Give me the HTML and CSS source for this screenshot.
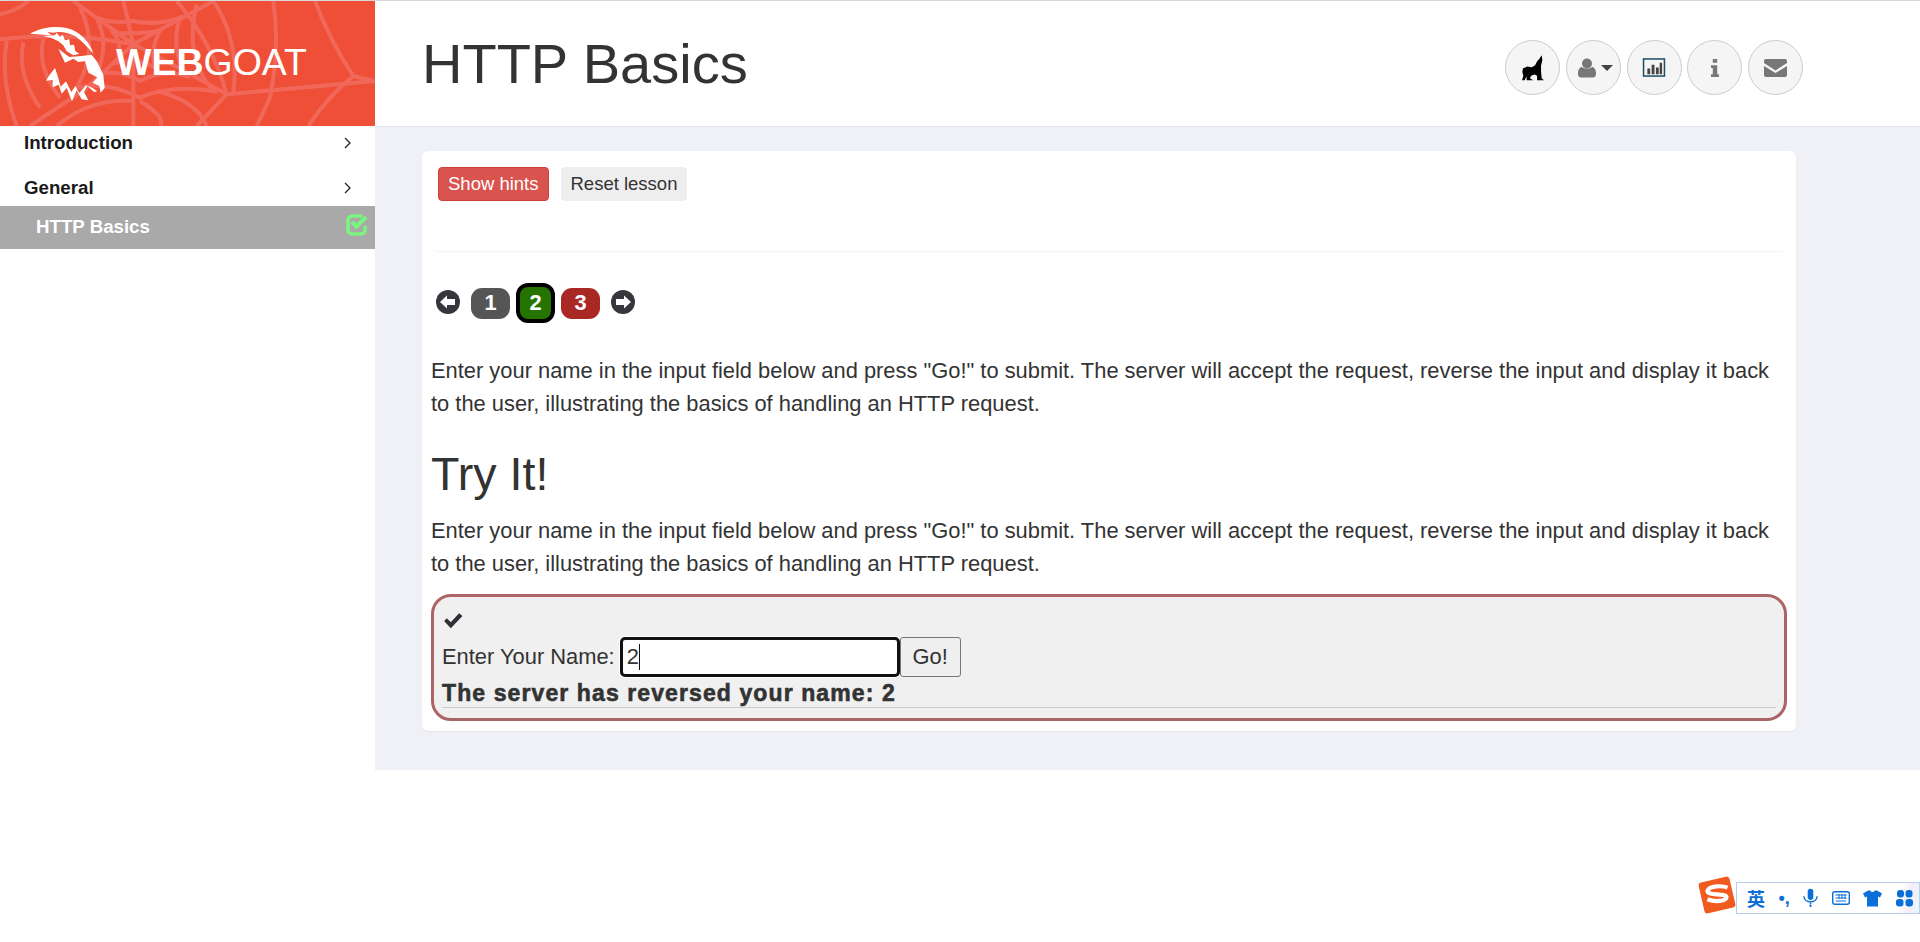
FILE: index.html
```html
<!DOCTYPE html>
<html lang="en">
<head>
  <meta charset="UTF-8">
  <title>WebGoat</title>
  <link rel="stylesheet" href="styles.css">
</head>
<body>
  <div class="app">
    <aside class="sidebar">
      <div class="logo">
        <svg class="web" viewBox="0 0 1125 375" width="375" height="125">
          <g fill="none" stroke="#f1685b" stroke-width="12">
            <path d="M400 130 Q200 90 0 115 M400 130 L220 0 M400 130 L370 0 M400 130 L640 0 M400 130 Q540 200 680 280 Q900 260 1125 240 M400 130 L250 270 Q170 320 90 375 M400 130 L400 375 M680 280 L590 375"/>
            <path d="M340 95 Q370 130 350 185 Q410 170 465 200 Q450 140 480 90 Q410 100 340 95 Z"/>
            <path d="M290 50 Q330 130 290 220 Q360 205 420 240 Q490 205 560 225 Q510 140 540 50 Q470 75 400 60 Q340 70 290 50 Z"/>
            <path d="M240 20 Q300 140 230 260 Q320 240 420 290 Q510 250 640 270 Q550 170 590 10"/>
            <path d="M20 120 Q0 240 50 375 M70 125 Q50 220 120 320 M130 115 Q110 200 180 290 M0 40 Q50 30 85 0"/>
            <path d="M170 375 Q270 290 400 300 M420 300 Q500 350 480 375 M470 270 Q590 300 620 375"/>
            <path d="M530 0 Q640 130 680 280 M640 0 Q720 120 700 275"/>
            <path d="M820 0 Q840 140 810 290 L770 375 M945 0 Q990 120 1060 225 Q980 290 925 375 M1060 225 L1125 240"/>
          </g>
        </svg>
        <svg class="goat" viewBox="0 0 360 300" width="120" height="100">
          <g fill="#fff">
            <path d="M60 65 C90 48 130 40 170 48 C210 58 240 90 250 125 C232 105 215 85 195 72 C170 60 150 58 130 62 L112 60 L125 70 L100 68 Z"/>
            <path d="M100 72 L135 70 L140 62 L150 75 L158 68 L165 85 L178 82 L180 100 L192 98 L196 118 L208 125 L190 130 L170 118 L160 100 L145 88 L125 78 Z"/>
            <path d="M145 110 L178 135 L215 132 L245 128 L262 150 L280 188 L284 228 L272 242 L268 222 L248 212 L262 196 L235 182 L225 148 L205 150 L190 140 L170 150 L165 152 Z"/>
            <path d="M135 168 L118 190 L108 206 L128 204 L128 226 L146 218 L155 245 L170 228 L186 268 L200 235 L215 262 L235 265 L222 240 L232 222 L252 240 L262 238 L248 228 L228 220 L208 244 L196 222 L184 240 L168 208 L152 224 L144 195 Z"/>
          </g>
        </svg>
        <span class="logo-text"><b>WEB</b>GOAT</span>
      </div>
      <nav class="menu">
        <a class="menu-item">Introduction
          <svg class="chev" viewBox="0 0 8 12" width="8" height="12"><path d="M1 1l5 5-5 5" fill="none" stroke="#222" stroke-width="1.3"/></svg>
        </a>
        <a class="menu-item">General
          <svg class="chev" viewBox="0 0 8 12" width="8" height="12"><path d="M1 1l5 5-5 5" fill="none" stroke="#222" stroke-width="1.3"/></svg>
        </a>
        <a class="menu-sub">HTTP Basics
          <svg class="done" viewBox="0 0 22 22" width="22" height="22"><path d="M19 12v4a4 4 0 0 1-4 4H6a4 4 0 0 1-4-4V6a4 4 0 0 1 4-4h10" fill="none" stroke="#7bf57f" stroke-width="3.600"/><path d="M6 8l4.500 4.500L20 3" fill="none" stroke="#7bf57f" stroke-width="4.200"/></svg>
        </a>
      </nav>
    </aside>

    <div class="content">
      <header class="topbar">
        <h1>HTTP Basics</h1>
        <div class="tools">
          <span class="round">
            <svg viewBox="0 0 67 77" width="22" height="26"><path d="M60 0 L62 14 L58 32 L58 50 L60 70 L67 76 L46 76 L46 62 L38 58 L28 62 L24 70 L34 76 L14 76 L14 64 L8 76 L0 76 L4 62 L1 50 L3 40 L16 34 L30 36 L40 30 L46 18 L52 12 Z"/></svg>
          </span>
          <span class="round">
            <svg viewBox="0 0 18 20" width="18" height="20"><circle cx="9" cy="5.500" r="5" fill="#777"/><path d="M0 16c0-5 2-7 4-7 1.500 1 3 1.500 5 1.500s3.500-.5 5-1.500c2 0 4 2 4 7 0 2.500-1.500 3.500-3 3.500H3c-1.500 0-3-1-3-3.500z" fill="#777"/></svg>
            <i class="caret"></i>
          </span>
          <span class="round">
            <svg viewBox="0 0 24 20" width="24" height="19"><rect x="1" y="1" width="22" height="18" fill="none" stroke="#1f4e68" stroke-width="1.600"/><path d="M5 11h3v6H5zM9.500 7h3v10h-3zM14 10h3v7h-3zM18 5h2.500v12H18z" fill="#444"/></svg>
          </span>
          <span class="round">
            <svg viewBox="0 0 9 20" width="8" height="18"><path d="M2 0h5v4H2zM0 7h7v10h2v3H0v-3h2v-7H0z" fill="#777"/></svg>
          </span>
          <span class="round">
            <svg viewBox="0 0 23 18" width="23" height="18"><path d="M2 0h19a2 2 0 0 1 2 2v2L11.500 11.500 0 4V2a2 2 0 0 1 2-2zM0 7l11.500 7L23 7v9a2 2 0 0 1-2 2H2a2 2 0 0 1-2-2z" fill="#777"/></svg>
          </span>
        </div>
      </header>

      <main class="lesson-wrap">
        <section class="lesson">
          <div class="lesson-actions">
            <button class="btn btn-hints">Show hints</button>
            <button class="btn btn-reset">Reset lesson</button>
          </div>

          <div class="pager">
            <svg class="arrow" viewBox="0 0 24 24" width="24" height="24"><circle cx="12" cy="12" r="12" fill="#36363c"/><path d="M4 12l7-6.500V9h8v6h-8v3.500z" fill="#fff"/></svg>
            <span class="page page-seen">1</span>
            <span class="page page-current">2</span>
            <span class="page page-todo">3</span>
            <svg class="arrow" viewBox="0 0 24 24" width="24" height="24"><circle cx="12" cy="12" r="12" fill="#36363c"/><path d="M20 12l-7-6.500V9H5v6h8v3.500z" fill="#fff"/></svg>
          </div>

          <p class="lesson-text">Enter your name in the input field below and press "Go!" to submit. The server will accept the request, reverse the input and display it back to the user, illustrating the basics of handling an HTTP request.</p>
          <h2>Try It!</h2>
          <p class="lesson-text">Enter your name in the input field below and press "Go!" to submit. The server will accept the request, reverse the input and display it back to the user, illustrating the basics of handling an HTTP request.</p>

          <div class="attack">
            <svg class="tick" viewBox="0 0 18 15" width="20" height="17"><path d="M1 8l2.500-2.500L7 9l7.500-8L17.500 3.500 7 14.500z" fill="#2f2f35"/></svg>
            <form class="attack-form">
              <label>Enter Your Name:</label>
              <span class="name-input">2<i class="cursor"></i></span>
              <span class="go">Go!</span>
            </form>
            <div class="feedback">The server has reversed your name: 2</div>
            <hr>
          </div>
        </section>
      </main>
    </div>
  </div>

  <div class="ime">
    <svg class="ime-logo" viewBox="0 0 36 36" width="38" height="38">
      <rect x="3" y="3" width="30" height="30" rx="3" fill="#f15a1f" transform="rotate(-13 18 18)"/>
      <path d="M28 11c-5-2-17-2-19 3-1 5 17 2 18 6 0 4-11 5-18 2" fill="none" stroke="#fff" stroke-width="4"/>
    </svg>
    <span class="ime-bar">
      <span class="ime-lang">英</span>
      <span class="ime-punct">•,</span>
      <svg viewBox="0 0 16 20" width="15" height="20"><rect x="5" y="0" width="6" height="12" rx="3" fill="#0a6fd8"/><path d="M1 8c0 8 14 8 14 0M8 15v2" fill="none" stroke="#0a6fd8" stroke-width="1.500"/><circle cx="8" cy="18.500" r="1.200" fill="#0a6fd8"/></svg>
      <svg viewBox="0 0 18 14" width="18" height="14"><rect x=".7" y=".7" width="16.600" height="12.600" rx="2" fill="none" stroke="#0a6fd8" stroke-width="1.400"/><path d="M3.500 4h11M3.500 7h11M4 10h10M7 3v5M10 3v5M13 3v5" stroke="#0a6fd8"/></svg>
      <svg viewBox="0 0 19 16" width="19" height="17"><path d="M5 0h2.500c.5 2 3.500 2 4 0H14l5 3-2 4-2-1v10H4V6L2 7 0 3z" fill="#0a6fd8"/></svg>
      <svg viewBox="0 0 17 17" width="17" height="17"><g fill="#0a6fd8"><rect x="1" y="0" width="7" height="7.500" rx="3"/><rect x="9.500" y="0" width="7" height="7.500" rx="3"/><rect x="0" y="9" width="7.500" height="7.500" rx="3"/><rect x="9.500" y="9" width="7.500" height="7.500" rx="3"/></g></svg>
    </span>
  </div>
</body>
</html>
```

FILE: styles.css
```css
* {
  box-sizing: border-box;
}

html, body {
  height: 100%;
}

body {
  margin: 0;
  background-color: #ffffff;
  color: #333333;
  font-family: "Liberation Sans", Arial, sans-serif;
  overflow: hidden;
}

.app {
  display: flex;
  align-items: flex-start;
  border-top: 1px solid #d8d8d8;
}

.sidebar {
  width: 375px;
  flex-shrink: 0;
}

.logo {
  position: relative;
  display: flex;
  align-items: center;
  height: 125px;
  padding-left: 10px;
  background-color: #ef4f37;
  overflow: hidden;
}

.web {
  position: absolute;
  left: 0;
  top: 0;
}

.goat {
  position: relative;
  margin-top: -4px;
  flex-shrink: 0;
}

.logo-text {
  position: relative;
  margin-left: -14px;
  margin-top: -2px;
  font-size: 37.500px;
  color: #ffffff;
}

.logo-text b {
  font-weight: bold;
}

.menu {
  display: flex;
  flex-direction: column;
}

.menu-item {
  display: flex;
  align-items: center;
  justify-content: space-between;
  height: 44px;
  padding: 0 23px 0 24px;
  font-size: 18.700px;
  font-weight: bold;
  color: #1a1a1a;
}

.menu-item:first-child {
  height: 34px;
  margin-bottom: 10px;
}

.menu-item:nth-child(2) {
  height: 36px;
  padding-top: 0;
}

.menu-sub {
  display: flex;
  align-items: center;
  justify-content: space-between;
  height: 43px;
  padding: 0 7px 2px 36px;
  font-size: 18.700px;
  font-weight: bold;
  color: #ffffff;
  background-color: #a9a9a9;
}

.done {
  margin-top: -4px;
}

.content {
  flex: 1;
  min-width: 0;
}

.topbar {
  display: flex;
  align-items: center;
  height: 126px;
  padding: 0 117px 0 47px;
  border-bottom: 1px solid #e4e6ee;
}

h1 {
  flex: 1;
  margin: 0;
  font-size: 56px;
  font-weight: normal;
  color: #333333;
}

.tools {
  display: flex;
  gap: 5.750px;
  margin-top: 8px;
}

.round {
  display: flex;
  align-items: center;
  justify-content: center;
  gap: 5px;
  width: 55px;
  height: 55px;
  border: 1px solid #cccccc;
  border-radius: 50%;
  background-color: #f5f5f5;
}

.caret {
  border-top: 6px solid #444444;
  border-left: 6px solid transparent;
  border-right: 6px solid transparent;
  margin-right: -4px;
}

.lesson-wrap {
  background-color: #f0f1f6;
  padding: 24px 124px 39px 47px;
}

.lesson {
  background-color: #ffffff;
  border-radius: 6px;
  padding: 0 9px 10px;
  box-shadow: 0 1px 2px rgba(0, 0, 0, 0.06);
}

.lesson-actions {
  display: flex;
  align-items: flex-start;
  gap: 12px;
  height: 100px;
  padding: 16px 7px 0;
  border-radius: 6px;
  box-shadow: 0 2px 2px -1px rgba(0, 0, 0, 0.06);
}

.btn {
  height: 34px;
  padding: 0 9px;
  border: 1px solid transparent;
  border-radius: 4px;
  font-family: inherit;
  font-size: 18.500px;
}

.btn-hints {
  background-color: #d9534f;
  border-color: #d43f3a;
  color: #ffffff;
}

.btn-reset {
  background-color: #eeeeee;
  color: #333333;
}

.pager {
  display: flex;
  align-items: center;
  height: 40px;
  margin-top: 32px;
  padding-left: 5px;
}

.arrow {
  margin-top: -3px;
}

.page {
  display: flex;
  align-items: center;
  justify-content: center;
  width: 39px;
  height: 31px;
  margin-left: 6px;
  border-radius: 11px;
  font-size: 21.800px;
  font-weight: bold;
  color: #ffffff;
}

.page-seen {
  margin-left: 11px;
  background-color: #555555;
}

.page-current {
  height: 40px;
  border: 4px solid #000000;
  border-radius: 12px;
  background-color: #267400;
}

.page-todo {
  margin-right: 11px;
  background-color: #a92824;
}

.lesson-text {
  margin: 0;
  font-size: 21.880px;
  line-height: 33px;
  color: #333333;
}

.pager + .lesson-text {
  margin-top: 31px;
}

h2 {
  margin: 24px 0 10px;
  font-size: 46.600px;
  font-weight: normal;
  line-height: 60px;
}

.attack {
  height: 127px;
  margin-top: 14px;
  padding: 15px 8px 0;
  border: 3px solid #ac6566;
  border-radius: 20px;
  background-color: #f0f0f0;
}

.tick {
  display: block;
  margin-left: 1px;
}

.attack-form {
  display: flex;
  align-items: center;
  margin-top: 8px;
  font-size: 21.880px;
}

.name-input {
  display: flex;
  align-items: center;
  width: 280px;
  height: 40px;
  margin-left: 5px;
  padding-left: 4px;
  border: 3px solid #111111;
  border-radius: 5px;
  background-color: #ffffff;
  box-shadow: 0 0 0 1px #ffffff;
}

.cursor {
  width: 1px;
  height: 26px;
  background-color: #111111;
}

.go {
  display: flex;
  align-items: center;
  justify-content: center;
  width: 61px;
  height: 40px;
  border: 1px solid #767676;
  border-radius: 3px;
  background-color: #efefef;
}

.feedback {
  margin-top: 3px;
  font-size: 23px;
  font-weight: bold;
  line-height: 26px;
  letter-spacing: 1.100px;
  -webkit-text-stroke: 0.600px #333333;
}

.attack hr {
  height: 1px;
  margin: 1px 0 0;
  border: 0;
  background-color: #cccccc;
}

.ime {
  position: absolute;
  left: 1698px;
  top: 876px;
  display: flex;
  align-items: flex-start;
  width: 222px;
  height: 40px;
}

.ime-logo {
  position: relative;
  flex-shrink: 0;
  z-index: 1;
}

.ime-bar {
  display: flex;
  align-items: center;
  justify-content: space-between;
  width: 184px;
  height: 32px;
  margin-top: 6px;
  padding: 0 6px 0 10px;
  border: 1px solid #b9cfe9;
  background: linear-gradient(100deg, #ffffff 88%, #f5ecfa 94%, #e6fafa 100%);
}

.ime-lang {
  font-family: "Noto Sans CJK SC", sans-serif;
  font-size: 18px;
  font-weight: bold;
  color: #0a6fd8;
}

.ime-punct {
  font-size: 18px;
  font-weight: bold;
  color: #0a6fd8;
}
```
